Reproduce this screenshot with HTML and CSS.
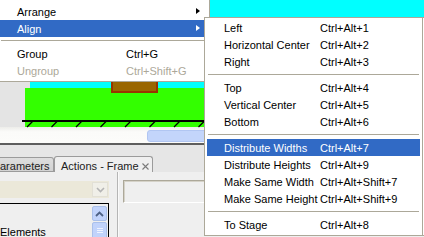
FILE: index.html
```html
<!DOCTYPE html>
<html>
<head>
<meta charset="utf-8">
<link rel="stylesheet" href="styles.css">
</head>
<body>
<div class="app">
  <div class="stage">
    <div class="shape sky"></div>
    <div class="shape ground"></div>
    <div class="shape crate"></div>
    <div class="shape floor"></div>
    <svg class="shape hatch" width="424" height="8" viewBox="0 0 424 8">
      <g stroke="#000" stroke-width="1.3">
        <line x1="27" y1="7" x2="33" y2="1"/>
        <line x1="51.5" y1="7" x2="57.5" y2="1"/>
        <line x1="76" y1="7" x2="82" y2="1"/>
        <line x1="100.5" y1="7" x2="106.5" y2="1"/>
        <line x1="125" y1="7" x2="131" y2="1"/>
        <line x1="149.5" y1="7" x2="155.5" y2="1"/>
        <line x1="174" y1="7" x2="180" y2="1"/>
        <line x1="198.5" y1="7" x2="204.5" y2="1"/>
      </g>
    </svg>
  </div>
  <div class="scrollbar">
    <div class="thumb"></div>
  </div>
  <div class="rule"></div>
  <div class="tabstrip">
    <div class="tab">arameters</div>
    <div class="tab active"><span>Actions - Frame</span>
      <svg class="close" width="7" height="7" viewBox="0 0 7 7"><path d="M0.5 0.5 L6.5 6.5 M6.5 0.5 L0.5 6.5" stroke="#7a7a7a" stroke-width="1.1"/></svg>
    </div>
  </div>
  <div class="panels">
    <div class="left-panel">
      <div class="combo">
        <div class="combo-field"></div>
        <div class="combo-btn">
          <svg width="9" height="6" viewBox="0 0 9 6"><path d="M1 1 L4.5 4.5 L8 1" fill="none" stroke="#b4b4b4" stroke-width="1.6"/></svg>
        </div>
      </div>
      <div class="tree">
        <div class="tree-list">
          <div class="tree-item">Elements</div>
        </div>
        <div class="vscroll">
          <div class="sbtn">
            <svg width="9" height="6" viewBox="0 0 9 6"><path d="M1 5 L4.5 1.5 L8 5" fill="none" stroke="#4d6185" stroke-width="1.8"/></svg>
          </div>
          <div class="sthumb">
            <span></span><span></span><span></span>
          </div>
        </div>
      </div>
    </div>
    <div class="vdivider"></div>
    <div class="right-panel">
      <div class="box"></div>
    </div>
  </div>
</div>

<div class="menu main-menu">
  <div class="item"><span class="label">Arrange</span><span class="arrow"></span></div>
  <div class="item hl"><span class="label">Align</span><span class="arrow"></span></div>
  <div class="sep"></div>
  <div class="item"><span class="label">Group</span><span class="key">Ctrl+G</span></div>
  <div class="item disabled"><span class="label">Ungroup</span><span class="key">Ctrl+Shift+G</span></div>
</div>

<div class="menu sub-menu">
  <div class="item"><span class="label">Left</span><span class="key">Ctrl+Alt+1</span></div>
  <div class="item"><span class="label">Horizontal Center</span><span class="key">Ctrl+Alt+2</span></div>
  <div class="item"><span class="label">Right</span><span class="key">Ctrl+Alt+3</span></div>
  <div class="sep"></div>
  <div class="item"><span class="label">Top</span><span class="key">Ctrl+Alt+4</span></div>
  <div class="item"><span class="label">Vertical Center</span><span class="key">Ctrl+Alt+5</span></div>
  <div class="item"><span class="label">Bottom</span><span class="key">Ctrl+Alt+6</span></div>
  <div class="sep"></div>
  <div class="item hl"><span class="label">Distribute Widths</span><span class="key">Ctrl+Alt+7</span></div>
  <div class="item"><span class="label">Distribute Heights</span><span class="key">Ctrl+Alt+9</span></div>
  <div class="item"><span class="label">Make Same Width</span><span class="key">Ctrl+Alt+Shift+7</span></div>
  <div class="item"><span class="label">Make Same Height</span><span class="key">Ctrl+Alt+Shift+9</span></div>
  <div class="sep"></div>
  <div class="item"><span class="label">To Stage</span><span class="key">Ctrl+Alt+8</span></div>
</div>
</body>
</html>
```

FILE: styles.css
```css
* { box-sizing: border-box; }
html, body {
  margin: 0;
  padding: 0;
  width: 424px;
  height: 237px;
  overflow: hidden;
  font-family: "Liberation Sans", Arial, sans-serif;
  font-size: 11px;
  color: #000;
  background: #efefef;
}
.app {
  display: flex;
  flex-direction: column;
  width: 424px;
  height: 237px;
}

/* stage (drawing canvas) */
.stage {
  position: relative;
  height: 127px;
  background: #e4e4e4;
  flex: none;
}
.shape { position: absolute; }
.sky { left: 30px; top: 0; right: 0; height: 88px; background: #00ffff; }
.ground { left: 25px; top: 88px; right: 0; height: 39px; background: #33ff00; }
.crate {
  left: 111px; top: 70px; width: 47px; height: 23px;
  background: #996600;
  border: 2px solid #993300;
  border-top: none;
}
.floor { left: 22px; top: 120px; right: 0; height: 2px; background: #000; }
.hatch { left: 0; top: 120px; }

/* horizontal scrollbar under stage */
.scrollbar {
  height: 16px;
  flex: none;
  background: linear-gradient(#ededea, #fbfbf9 30%, #fcfcfa);
  padding: 3px 0 1px 147px;
}
.thumb {
  width: 80px;
  height: 12px;
  background: #c3d5fb;
  border: 1px solid #b1c6f2;
  border-radius: 3px;
}
.rule { height: 2px; background: #5e5e5e; flex: none; }

/* tabs */
.tabstrip {
  height: 27px;
  flex: none;
  background: #e6e6e6;
  display: flex;
  align-items: flex-end;
}
.tab {
  height: 15px;
  padding: 2px 9px 0 0;
  background: linear-gradient(#dedede, #d2d2d2);
  border: 1px solid #9b9b9b;
  border-left: none;
  border-radius: 0 3px 0 0;
  line-height: 12px;
  color: #222;
  width: 54px;
  text-align: right;
}
.tab.active {
  width: 99px;
  height: 16px;
  background: #efefef;
  border: 1px solid #9b9b9b;
  border-bottom: none;
  border-radius: 3px 3px 0 0;
  text-align: left;
  padding: 3px 0 0 6px;
  display: flex;
  align-items: flex-start;
  gap: 3px;
}
.close { margin-top: 3px; flex: none; }

/* panels */
.panels {
  flex: 1;
  display: flex;
  background: #efefef;
}
.left-panel {
  width: 109px;
  flex: none;
  padding-top: 9px;
}
.combo {
  display: flex;
  height: 17px;
  background: #ebe8d9;
}
.combo-field { flex: 1; }
.combo-btn {
  width: 16px;
  margin: 1px 1px 1px 0;
  background: #f0efe8;
  border: 1px solid #e2e0d6;
  display: flex;
  align-items: center;
  justify-content: center;
}
.tree {
  margin-top: 5px;
  height: 40px;
  border-top: 1px solid #000;
  border-right: 1px solid #000;
  display: flex;
}
.tree-list { flex: 1; padding-top: 22px; }
.tree-item { line-height: 13px; }
.vscroll { width: 16px; padding: 2px 1px 0 0; }
.sbtn {
  height: 15px;
  background: #c1d3fb;
  border: 1px solid #aac0ea;
  border-radius: 2px;
  display: flex;
  align-items: center;
  justify-content: center;
}
.sthumb {
  margin-top: 1px;
  height: 20px;
  background: #c1d3fb;
  border: 1px solid #aac0ea;
  border-radius: 2px;
  display: flex;
  flex-direction: column;
  align-items: center;
  padding-top: 5px;
  gap: 1px;
}
.sthumb span { width: 6px; height: 1px; background: #eef3ff; }
.vdivider {
  width: 2px;
  margin-left: 8px;
  background: #b5b5b5;
  border-right: 1px solid #fafafa;
  flex: none;
}
.right-panel { flex: 1; padding: 8px 0 0 4px; }
.box {
  height: 23px;
  border: 1px solid #aca899;
  border-width: 1px 0 1px 1px;
  border-bottom-color: #fff;
  box-shadow: inset 1px 1px 0 #d5d2c8;
}

/* menus (overlays) */
.menu {
  position: absolute;
  background: #fff;
  display: flex;
  flex-direction: column;
}
.main-menu {
  left: -2px;
  top: -1px;
  width: 212px;
  padding: 4px 3px 2px 2px;
  border-right: 1px solid #aca899;
  border-bottom: 1px solid #aca899;
}
.sub-menu {
  left: 204px;
  top: 17px;
  width: 220px;
  padding: 1px 4px 2px 2px;
  border: 1px solid #aca899;
  border-right: none;
  box-shadow: inset -1px 0 0 #fff, inset -2px 0 0 #aca899;
}
.item {
  height: 17px;
  display: flex;
  align-items: center;
  position: relative;
  white-space: nowrap;
}
.main-menu .label { padding-left: 17px; width: 126px; }
.sub-menu .label { padding-left: 17px; width: 113px; }
.item .key { flex: none; }
.item.hl { background: #316ac5; color: #fff; }
.item.disabled { color: #aca899; }
.sep {
  height: 8px;
  margin: 0 1px;
  position: relative;
}
.sep::after {
  content: "";
  position: absolute;
  left: 0; right: 0; top: 3px;
  height: 1px;
  background: #aca899;
}
.sub-menu .sep { height: 9px; }
.sub-menu .sep::after { top: 4px; }
.arrow {
  position: absolute;
  left: 196px;
  top: 5px;
  width: 0; height: 0;
  border-top: 3.5px solid transparent;
  border-bottom: 3.5px solid transparent;
  border-left: 4px solid #000;
}
.item.hl .arrow { border-left-color: #fff; }
```
